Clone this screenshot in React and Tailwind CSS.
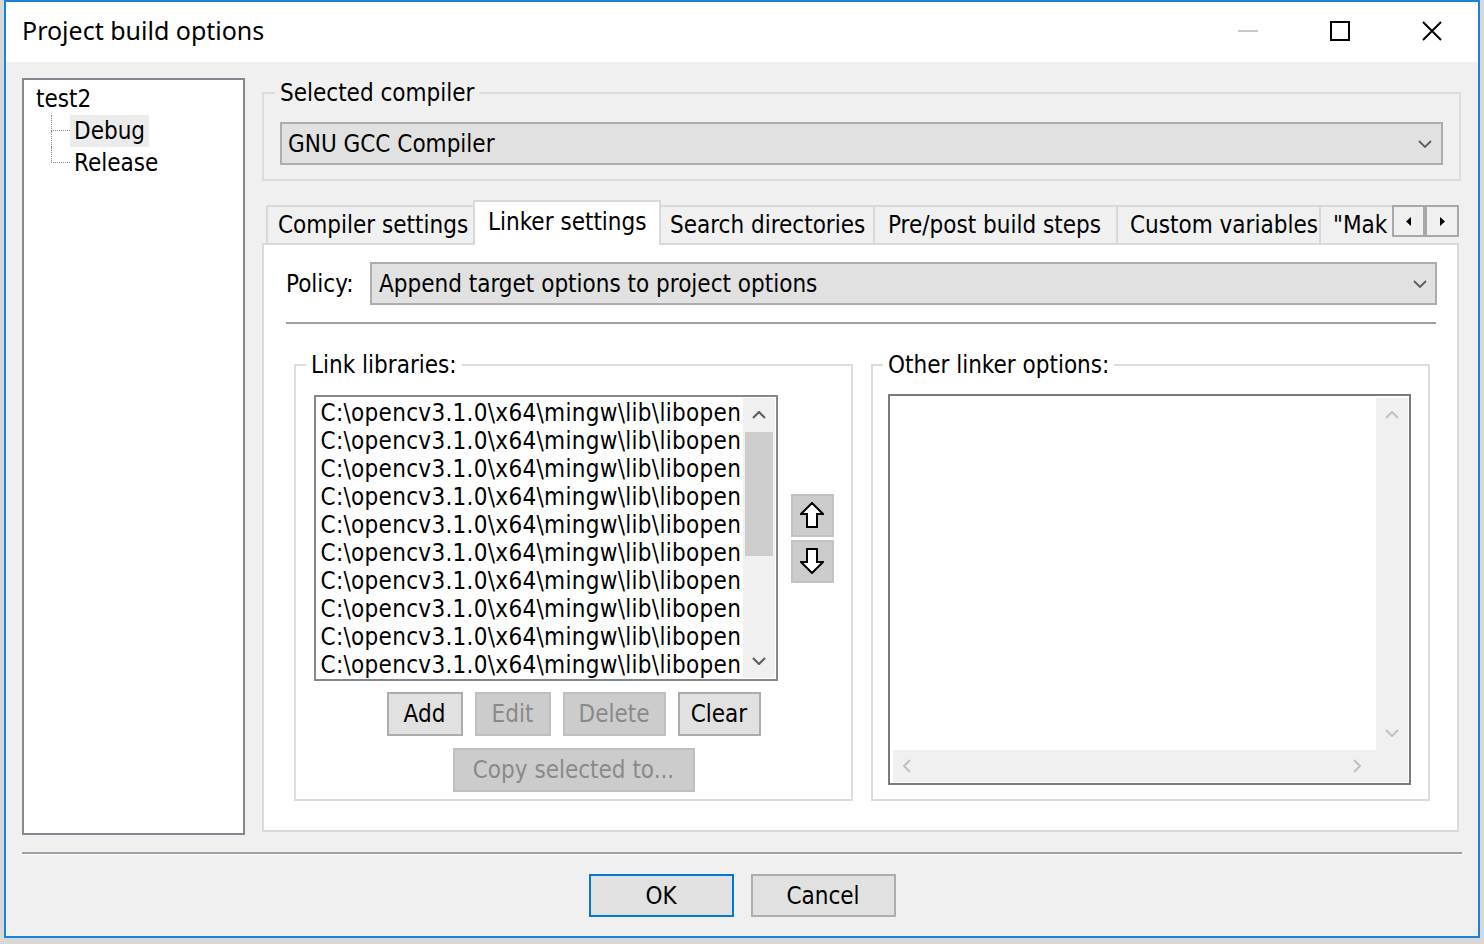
import React from 'react';

const libs = Array.from({ length: 10 }, () => 'C:\\opencv3.1.0\\x64\\mingw\\lib\\libopen');

function ChevDown({ color = '#5c5c5c' }) {
  return (
    <svg width="14" height="8" viewBox="0 0 14 8">
      <path d="M1 1 L7 7 L13 1" fill="none" stroke={color} strokeWidth="1.8" />
    </svg>
  );
}

function ChevUp({ color = '#5c5c5c' }) {
  return (
    <svg width="14" height="8" viewBox="0 0 14 8">
      <path d="M1 7 L7 1 L13 7" fill="none" stroke={color} strokeWidth="2.2" />
    </svg>
  );
}

function ChevSide({ dir, color = '#c2c2c2' }) {
  return (
    <svg width="8" height="14" viewBox="0 0 8 14">
      <path d={dir === 'left' ? 'M7 1 L1 7 L7 13' : 'M1 1 L7 7 L1 13'} fill="none" stroke={color} strokeWidth="2.2" />
    </svg>
  );
}

function Combo({ text, className }) {
  return (
    <div className={`h-[43px] bg-[#e1e1e1] border-2 border-[#adadad] flex items-center justify-between ${className}`}>
      <span className="whitespace-nowrap">{text}</span>
      <ChevDown />
    </div>
  );
}

function Btn({ children, w, disabled }) {
  return (
    <div
      className={`${w} h-[44px] border-2 flex items-center justify-center whitespace-nowrap ${
        disabled ? 'bg-[#cccccc] border-[#bfbfbf] text-[#8a8a8a]' : 'bg-[#e1e1e1] border-[#adadad] text-black'
      }`}
    >
      {children}
    </div>
  );
}

function MoveArrow({ down }) {
  return (
    <div className="w-[43px] h-[43px] bg-[#cccccc] border-2 border-[#c2c2c2] flex items-center justify-center">
      <svg width="24" height="26" viewBox="0 0 24 26">
        <polygon
          points={down ? '12,25 23,14 17,14 17,1 7,1 7,14 1,14' : '12,1 23,12 17,12 17,25 7,25 7,12 1,12'}
          fill="white"
          stroke="black"
          strokeWidth="2"
          strokeLinejoin="miter"
        />
      </svg>
    </div>
  );
}

function Connector({ last }) {
  return (
    <div className="w-[19px] flex flex-col">
      <div className="h-[16px] border-l border-b border-dotted border-[#8a8a8a]" />
      <div className={last ? 'h-[16px]' : 'h-[16px] border-l border-dotted border-[#8a8a8a]'} />
    </div>
  );
}

function Tree() {
  return (
    <div className="w-[223px] h-full border-2 border-[#828790] bg-white pt-[3px] pl-[12px]">
      <div className="h-[32px] flex items-center">test2</div>
      <div className="h-[32px] flex pl-[15px]">
        <Connector />
        <div className="h-[32px] px-[4px] bg-[#ececec] flex items-center">Debug</div>
      </div>
      <div className="h-[32px] flex pl-[15px]">
        <Connector last />
        <div className="h-[32px] px-[4px] flex items-center">Release</div>
      </div>
    </div>
  );
}

function Tabs() {
  return (
    <div className="h-[43px] flex items-end pl-[4px] shrink-0">
      <div className="w-[207px] h-[38px] bg-[#f0f0f0] border-l-2 border-t-2 border-[#d9d9d9] pl-[10px] flex items-center whitespace-nowrap overflow-hidden">
        Compiler settings
      </div>
      <div className="relative z-10 w-[188px] h-[45px] -mb-[2px] bg-white border-2 border-b-0 border-[#d9d9d9] pl-[13px] pb-[3px] flex items-center whitespace-nowrap overflow-hidden">
        Linker settings
      </div>
      <div className="w-[214px] h-[38px] bg-[#f0f0f0] border-t-2 border-r-2 border-[#d9d9d9] pl-[9px] flex items-center whitespace-nowrap overflow-hidden">
        Search directories
      </div>
      <div className="w-[243px] h-[38px] bg-[#f0f0f0] border-t-2 border-r-2 border-[#d9d9d9] pl-[13px] flex items-center whitespace-nowrap overflow-hidden">
        Pre/post build steps
      </div>
      <div className="w-[203px] h-[38px] bg-[#f0f0f0] border-t-2 border-r-2 border-[#d9d9d9] pl-[12px] flex items-center whitespace-nowrap overflow-hidden">
        Custom variables
      </div>
      <div className="w-[71px] h-[38px] bg-[#f0f0f0] border-t-2 border-[#d9d9d9] pl-[12px] flex items-center whitespace-nowrap overflow-hidden">
        "Mak
      </div>
      <div className="self-start mt-[5px] flex">
        <div className="w-[33px] h-[32px] bg-[#f0f0f0] border-2 border-[#a8a8a8] flex items-center justify-center">
          <svg width="5" height="9" viewBox="0 0 5 9"><polygon points="5,0 5,9 0,4.5" fill="black" /></svg>
        </div>
        <div className="w-[34px] h-[32px] bg-[#f0f0f0] border-2 border-[#a8a8a8] flex items-center justify-center">
          <svg width="5" height="9" viewBox="0 0 5 9"><polygon points="0,0 0,9 5,4.5" fill="black" /></svg>
        </div>
      </div>
    </div>
  );
}

function LinkLibraries() {
  return (
    <fieldset className="w-[559px] h-[448px] border-2 border-[#dcdcdc] p-0 m-0 min-w-0">
      <legend className="ml-[10px] px-[5px] leading-[24px]">Link libraries:</legend>
      <div className="flex flex-col items-center pt-[18px]">
        <div className="flex items-center gap-[13px]">
          <div className="w-[464px] h-[286px] border-2 border-[#828790] bg-white flex">
            <div className="flex-1 overflow-hidden pl-[5px] pt-[2px]">
              {libs.map((l, i) => (
                <div key={i} className="h-[28px] leading-[28px] whitespace-nowrap tracking-[0.3px]">
                  {l}
                </div>
              ))}
            </div>
            <div className="w-[32px] my-[1px] mr-[1px] bg-[#f0f0f0] flex flex-col items-center">
              <div className="h-[34px] flex items-center justify-center">
                <ChevUp color="#606060" />
              </div>
              <div className="w-[28px] h-[124px] bg-[#cdcdcd]" />
              <div className="flex-1" />
              <div className="h-[34px] flex items-center justify-center">
                <svg width="14" height="8" viewBox="0 0 14 8">
                  <path d="M1 1 L7 7 L13 1" fill="none" stroke="#606060" strokeWidth="2.2" />
                </svg>
              </div>
            </div>
          </div>
          <div className="flex flex-col gap-[3px]">
            <MoveArrow />
            <MoveArrow down />
          </div>
        </div>
        <div className="mt-[11px] flex gap-[12px]">
          <Btn w="w-[76px]">Add</Btn>
          <Btn w="w-[76px]" disabled>Edit</Btn>
          <Btn w="w-[103px]" disabled>Delete</Btn>
          <Btn w="w-[83px]">Clear</Btn>
        </div>
        <div className="mt-[12px]">
          <Btn w="w-[242px]" disabled>Copy selected to...</Btn>
        </div>
      </div>
    </fieldset>
  );
}

function OtherOptions() {
  return (
    <fieldset className="w-[559px] h-[448px] border-2 border-[#dcdcdc] p-0 m-0 min-w-0">
      <legend className="ml-[10px] px-[5px] leading-[24px]">Other linker options:</legend>
      <div className="pt-[17px] pl-[15px]">
        <div className="w-[523px] h-[391px] border-2 border-[#7a7a7a] bg-white flex flex-col pt-[2px] pb-[1px] pl-[3px] pr-[1px]">
          <div className="flex-1 flex">
            <div className="flex-1" />
            <div className="w-[32px] bg-[#f0f0f0] flex flex-col items-center justify-between py-[13px]">
              <ChevUp color="#c2c2c2" />
              <svg width="14" height="8" viewBox="0 0 14 8">
                <path d="M1 1 L7 7 L13 1" fill="none" stroke="#c2c2c2" strokeWidth="2.2" />
              </svg>
            </div>
          </div>
          <div className="h-[32px] flex">
            <div className="flex-1 bg-[#f0f0f0] flex items-center justify-between pl-[10px] pr-[15px]">
              <ChevSide dir="left" />
              <ChevSide dir="right" />
            </div>
            <div className="w-[32px] bg-[#f0f0f0]" />
          </div>
        </div>
      </div>
    </fieldset>
  );
}

export default function App() {
  return (
    <div className="w-[1484px] h-[944px] bg-[#d8d8d8] pl-[4px] overflow-hidden font-['DejaVu_Sans_Condensed','DejaVu_Sans',sans-serif] text-[24px] leading-[28px] text-black">
      <div className="w-[1476px] h-[938px] border-2 border-[#1a82d8] bg-[#f0f0f0] flex flex-col">
        {/* title bar */}
        <div className="h-[60px] bg-white flex items-start shrink-0">
          <div className="flex-1 h-[60px] flex items-center pl-[16px] pb-[4px] font-['Noto_Sans',sans-serif] text-[25px]">
            Project build options
          </div>
          <div className="w-[92px] h-[58px] flex items-center justify-center">
            <div className="w-[20px] h-[2px] bg-[#c8c8c8]" />
          </div>
          <div className="w-[92px] h-[58px] flex items-center justify-center">
            <div className="w-[20px] h-[20px] border-2 border-black" />
          </div>
          <div className="w-[92px] h-[58px] flex items-center justify-center">
            <svg width="20" height="20" viewBox="0 0 20 20">
              <path d="M1 1 L19 19 M19 1 L1 19" stroke="black" strokeWidth="2" />
            </svg>
          </div>
        </div>

        {/* body */}
        <div className="flex-1 flex flex-col px-[16px] pt-[16px]">
          <div className="h-[757px] flex gap-[17px]">
            <Tree />
            <div className="w-[1199px] flex flex-col pt-[3px]">
              <fieldset className="h-[100px] border-2 border-[#dcdcdc] p-0 m-0 min-w-0 shrink-0">
                <legend className="ml-[11px] px-[5px] leading-[24px]">Selected compiler</legend>
                <div className="px-[16px] pt-[17px]">
                  <Combo text="GNU GCC Compiler" className="pl-[6px] pr-[9px]" />
                </div>
              </fieldset>

              <div className="mt-[19px]">
                <Tabs />
              </div>

              <div className="h-[589px] mr-[2px] bg-white border-2 border-[#d9d9d9] flex flex-col pt-[17px] pl-[22px] pr-[20px]">
                <div className="flex items-center">
                  <div className="w-[84px] whitespace-nowrap">Policy:</div>
                  <Combo text="Append target options to project options" className="flex-1 pl-[7px] pr-[8px]" />
                </div>
                <div className="mt-[17px] h-[2px] bg-[#a0a0a0] mr-[1px]" />
                <div className="mt-[29px] pl-[8px] pr-[7px] flex gap-[18px]">
                  <LinkLibraries />
                  <OtherOptions />
                </div>
              </div>
            </div>
          </div>

          <div className="mt-[17px] h-[3px] border-t-2 border-t-[#a0a0a0] border-b border-b-white" />

          <div className="mt-[19px] flex justify-center gap-[17px]">
            <div className="w-[145px] h-[43px] bg-[#e1e1e1] border-2 border-[#0078d7] flex items-center justify-center">
              OK
            </div>
            <div className="w-[145px] h-[43px] bg-[#e1e1e1] border-2 border-[#adadad] flex items-center justify-center">
              Cancel
            </div>
          </div>
        </div>
      </div>
    </div>
  );
}
